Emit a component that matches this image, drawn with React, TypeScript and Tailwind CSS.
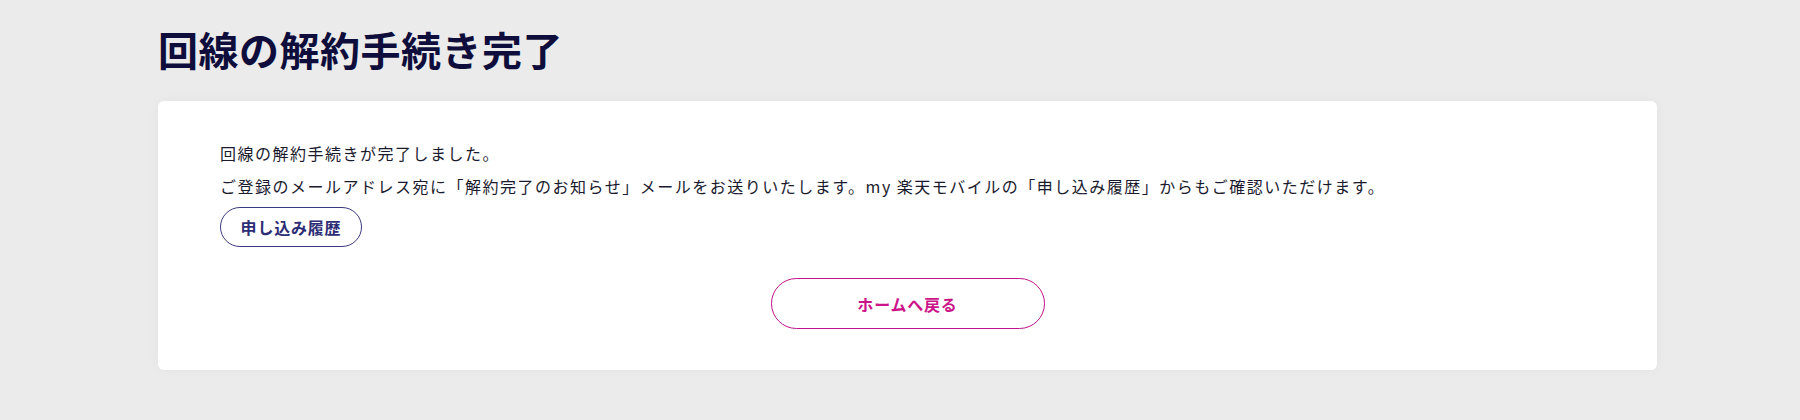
import React from "react";

export default function App() {
  return (
    <div className="min-h-[420px] w-full bg-[#ebebeb] font-['Noto_Sans_CJK_JP','Noto_Sans',sans-serif]">
      <div className="ml-[158px] w-[1499px] pt-[22px]">
        <h1 className="text-[40px] leading-[54px] font-bold tracking-[0.5px] text-[#0e0d3b]">
          回線の解約手続き完了
        </h1>
        <div className="mt-[25px] rounded-md bg-white px-[62px] pt-[36px] pb-[41px] shadow-[0_0_12px_rgba(0,0,0,0.04)]">
          <p className="text-[16px] leading-[33px] tracking-[1.5px] text-[#1a1a2e]">
            回線の解約手続きが完了しました。
          </p>
          <p className="text-[16px] leading-[33px] tracking-[1.5px] text-[#1a1a2e]">
            ご登録のメールアドレス宛に「解約完了のお知らせ」メールをお送りいたします。my 楽天モバイルの「申し込み履歴」からもご確認いただけます。
          </p>
          <button className="mt-[4px] flex h-[40px] w-[142px] items-center justify-center rounded-full border border-[#3a3a80] bg-white text-[16px] font-bold tracking-[0.8px] text-[#2d2d75]">
            申し込み履歴
          </button>
          <div className="mt-[31px] flex justify-center">
            <button className="flex h-[51px] w-[274px] items-center justify-center rounded-full border border-[#c0128a] bg-white text-[16px] font-bold tracking-[0.8px] text-[#cc1489]">
              ホームへ戻る
            </button>
          </div>
        </div>
      </div>
    </div>
  );
}
